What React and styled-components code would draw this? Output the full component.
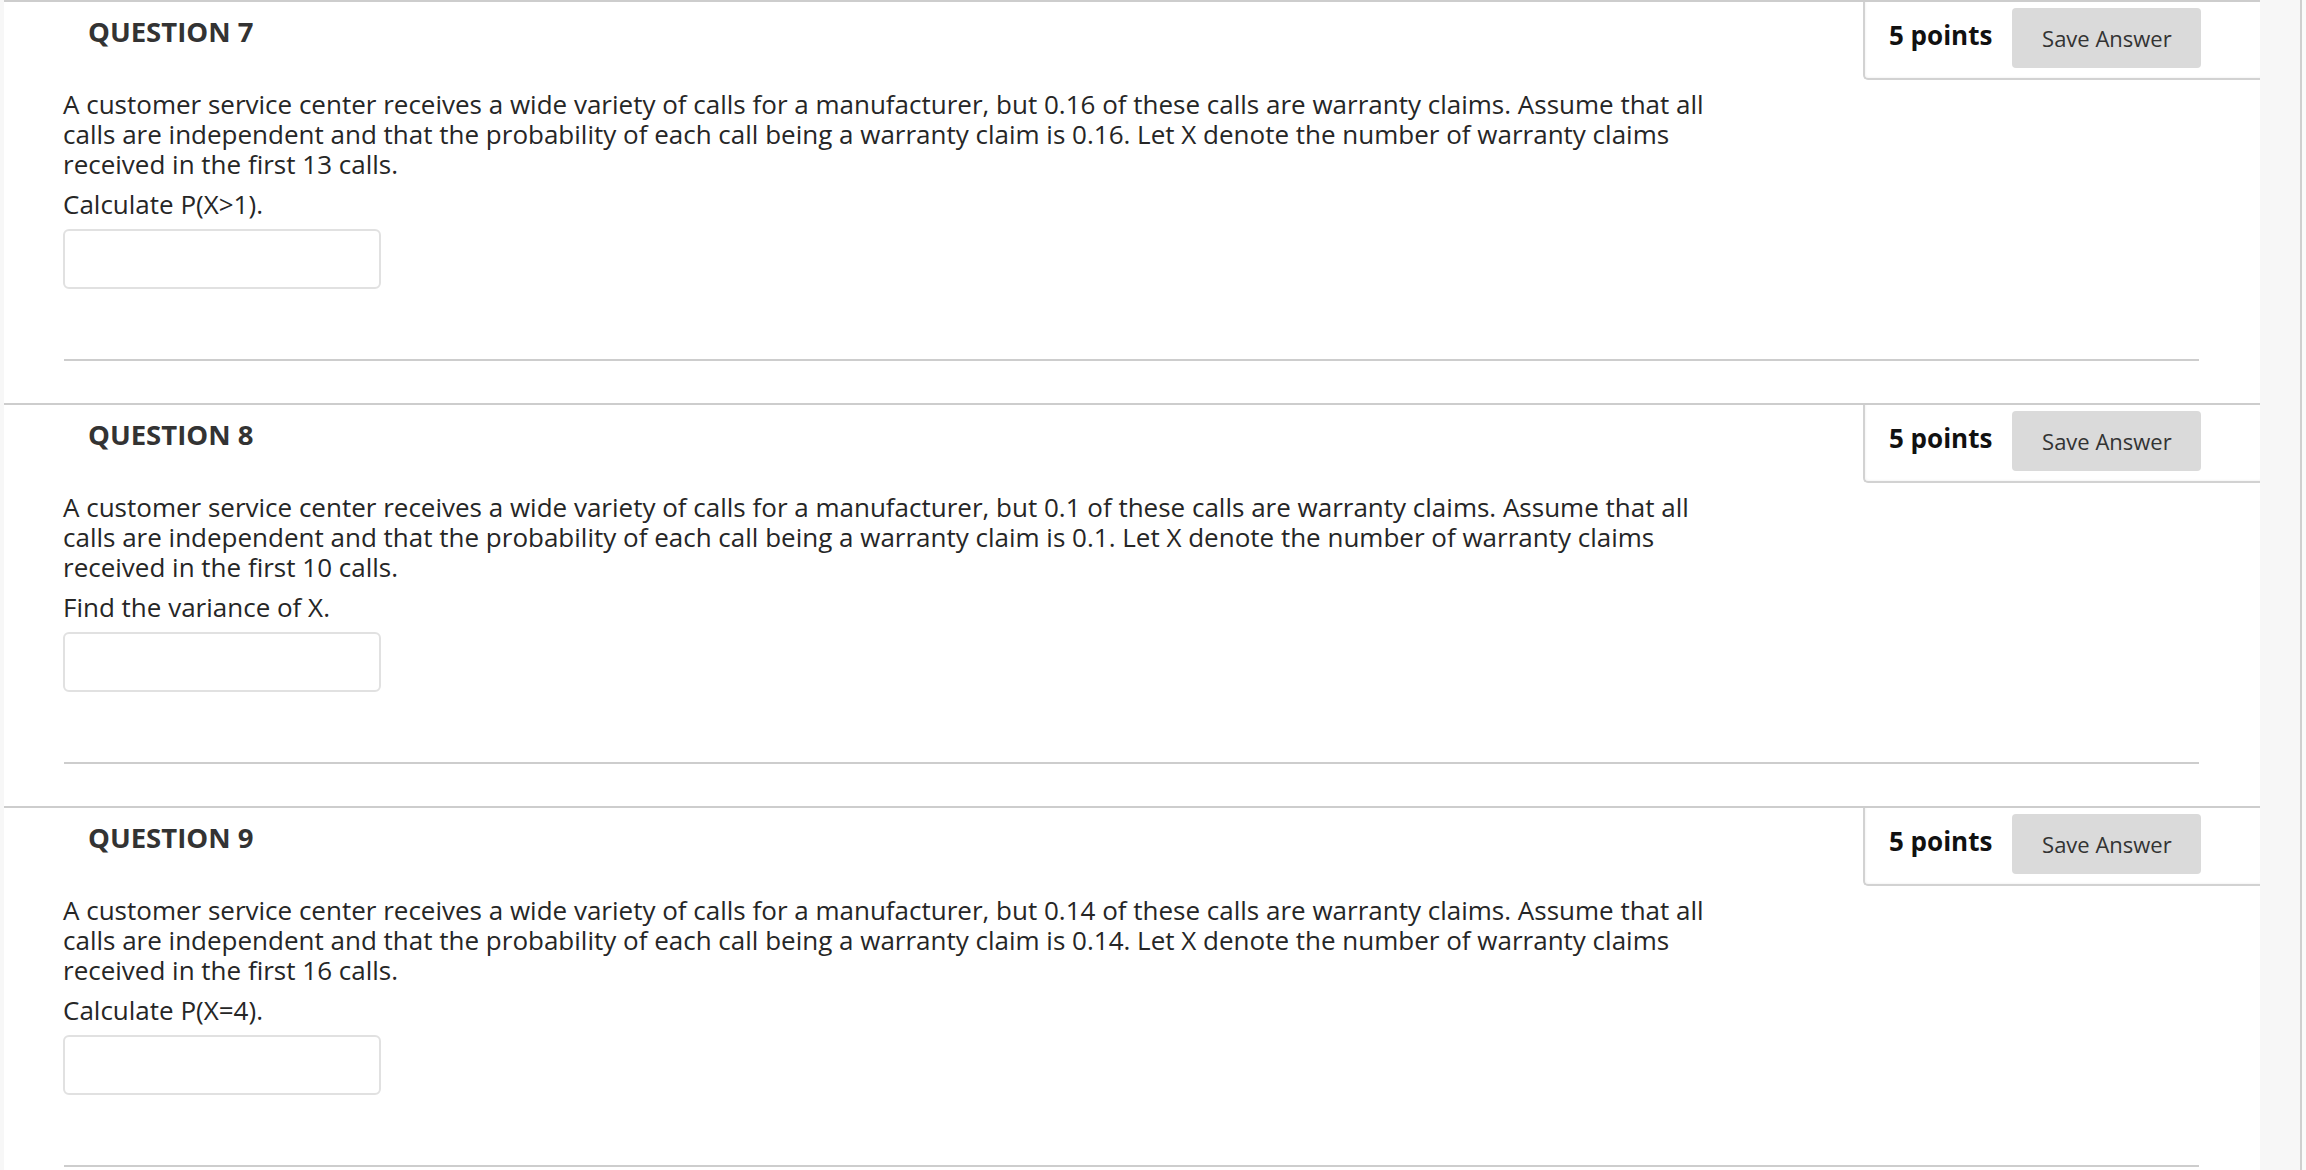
import React from 'react';
import styled, { createGlobalStyle } from 'styled-components';

const questions = [
  {
    number: 7,
    p: '0.16',
    n: 13,
    ask: 'Calculate P(X>1).'
  },
  {
    number: 8,
    p: '0.1',
    n: 10,
    ask: 'Find the variance of X.'
  },
  {
    number: 9,
    p: '0.14',
    n: 16,
    ask: 'Calculate P(X=4).'
  }
];

const GlobalStyle = createGlobalStyle`
  html, body {
    margin: 0;
    padding: 0;
    background: #f7f7f7;
  }
  body {
    font-family: "Open Sans", "Liberation Sans", sans-serif;
    overflow: hidden;
  }
`;

const Page = styled.div`
  display: flex;
  width: 2306px;
  height: 1170px;
  overflow: hidden;
`;

const Panel = styled.div`
  flex: none;
  width: 2256px;
  margin-left: 4px;
  background: #fff;
`;

const Rail = styled.div`
  flex: none;
  width: 40px;
  background: #f7f7f7;
`;

const RailEdge = styled.div`
  flex: none;
  width: 2px;
  background: #cfcfcf;
`;

const RailTail = styled.div`
  flex: 1;
  background: #fafafa;
`;

const Question = styled.section`
  height: 401px;
  border-top: 2px solid #cdcdcd;
`;

const Header = styled.div`
  display: flex;
  justify-content: space-between;
  align-items: flex-start;
  height: 78px;
`;

const Title = styled.h2`
  margin: 0;
  padding: 16px 0 0 84px;
  font-size: 27.5px;
  line-height: 28px;
  font-weight: 700;
  color: #333;
`;

const PointsBox = styled.div`
  display: flex;
  align-items: flex-start;
  gap: 20px;
  box-sizing: border-box;
  width: 397px;
  height: 78px;
  padding: 6px 0 0 24px;
  border-left: 2px solid #d2d2d2;
  border-bottom: 2px solid #d2d2d2;
  border-bottom-left-radius: 5px;
  box-shadow: inset 1px -1px 2px rgba(0, 0, 0, 0.04);
`;

const Points = styled.span`
  margin-top: 14px;
  font-size: 26px;
  line-height: 26px;
  font-weight: 700;
  color: #111;
  white-space: nowrap;
`;

const SaveButton = styled.button`
  width: 189px;
  height: 60px;
  padding: 0;
  border: none;
  border-radius: 4px;
  background: #dadada;
  color: #333;
  font-family: "Open Sans", "Liberation Sans", sans-serif;
  font-size: 22px;
`;

const Body = styled.div`
  width: 1680px;
  padding: 9px 0 0 59px;
`;

const Text = styled.p`
  margin: 0 0 10px 0;
  font-size: 26px;
  line-height: 30px;
  color: #262626;
`;

const AnswerInput = styled.input`
  display: block;
  box-sizing: border-box;
  width: 318px;
  height: 60px;
  margin: 1px 0 0 0;
  border: 2px solid #e1e1e1;
  border-radius: 6px;
  background: #fff;
`;

const Divider = styled.hr`
  margin: 70px 0 0 60px;
  width: 2135px;
  height: 2px;
  border: none;
  background: #cdcdcd;
`;

function QuestionBlock({ q }) {
  return (
    <Question>
      <Header>
        <Title>QUESTION {q.number}</Title>
        <PointsBox>
          <Points>5 points</Points>
          <SaveButton>Save Answer</SaveButton>
        </PointsBox>
      </Header>
      <Body>
        <Text>
          A customer service center receives a wide variety of calls for a manufacturer, but {q.p} of these calls are warranty claims. Assume that all calls are independent and that the probability of each call being a warranty claim is {q.p}. Let X denote the number of warranty claims received in the first {q.n} calls.
        </Text>
        <Text>{q.ask}</Text>
        <AnswerInput type="text" />
      </Body>
      <Divider />
    </Question>
  );
}

function App() {
  return (
    <Page>
      <GlobalStyle />
      <Panel>
        {questions.map(q => (
          <QuestionBlock key={q.number} q={q} />
        ))}
      </Panel>
      <Rail />
      <RailEdge />
      <RailTail />
    </Page>
  );
}

export default App;
